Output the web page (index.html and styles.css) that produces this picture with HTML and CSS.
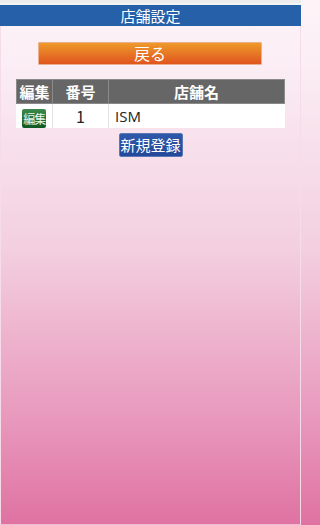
FILE: index.html
```html
<!DOCTYPE html>
<html lang="ja">
<head>
<meta charset="utf-8">
<title>店舗設定</title>
<link rel="stylesheet" href="styles.css">
</head>
<body>
<div class="page">
  <div class="topstrip"></div>
  <header class="header">店舗設定</header>
  <div class="back-wrap">
    <a class="back-btn">戻る</a>
  </div>
  <table class="shops">
    <thead>
      <tr>
        <th class="c-edit">編集</th>
        <th class="c-no">番号</th>
        <th class="c-name">店舗名</th>
      </tr>
    </thead>
    <tbody>
      <tr>
        <td class="c-edit"><span class="edit-btn">編集</span></td>
        <td class="c-no">1</td>
        <td class="c-name name">ISM</td>
      </tr>
    </tbody>
  </table>
  <div class="new-wrap">
    <a class="new-btn">新規登録</a>
  </div>
</div>
</body>
</html>
```
FILE: styles.css
```css
html, body {
  margin: 0;
  padding: 0;
}
body {
  font-family: "Noto Sans CJK JP", "Noto Sans", "DejaVu Sans", sans-serif;
  height: 525px;
  overflow: hidden;
  background: linear-gradient(to bottom, #fdf4f8 0px, #fbeef4 60px, #f3cfe0 250px, #e898bc 420px, #df72a2 525px);
}
.page {
  box-sizing: border-box;
  width: 301px;
  height: 525px;
  border-left: 1px solid #f6dce8;
  border-right: 1px solid #f6dce8;
  border-bottom: 1px solid #f2bcd4;
  background: linear-gradient(to bottom, #fdf4f8 0px, #fbeef4 60px, #f3cfe0 250px, #e898bc 420px, #df72a2 525px);
  display: flex;
  flex-direction: column;
}
.topstrip {
  height: 5px;
  background: #f3f3f3;
  border-top: 3px solid #ececec;
  box-sizing: border-box;
  margin: 0 -1px;
}
.header {
  height: 21px;
  background: #2660a8;
  color: #fff;
  text-align: center;
  font-size: 15px;
  line-height: 21px;
  margin: 0 -1px;
}
.back-wrap {
  padding: 16px 38px 0 37px;
}
.back-btn {
  display: block;
  height: 21px;
  line-height: 21px;
  text-align: center;
  color: #fff;
  font-size: 16px;
  background: linear-gradient(to bottom, #ee9a2a, #e0541f);
  border: 1px solid #e8b090;
  border-radius: 1px;
}
.shops {
  margin: 14px 0 0 15px;
  width: 269px;
  border-collapse: collapse;
  background: #fff;
}
.shops th {
  background: #666666;
  color: #fff;
  font-weight: bold;
  font-size: 15px;
  height: 23px;
  padding: 0;
  border: 1px solid #8a8a8a;
  line-height: 22px;
}
.shops td {
  height: 22px;
  padding: 0;
  font-size: 16px;
  text-align: center;
  border-left: 1px solid #e4e4e4;
  color: #222;
}
.shops td:first-child { border-left: none; }
.c-edit { width: 35px; }
.c-no { width: 55px; }
.shops td.name {
  text-align: left;
  padding-left: 6px;
  font-family: "Open Sans", "Noto Sans", sans-serif;
  font-size: 15px;
}
.edit-btn {
  display: inline-block;
  width: 24px;
  height: 19px;
  line-height: 19px;
  font-size: 12px;
  color: #e8f4e8;
  background: linear-gradient(to bottom, #3c8a4a, #0f5a22);
  border-radius: 2px;
  vertical-align: middle;
  letter-spacing: -1px;
}
.new-wrap {
  display: flex;
  justify-content: center;
  padding-top: 5px;
}
.new-btn {
  display: block;
  width: 62px;
  height: 22px;
  line-height: 22px;
  text-align: center;
  color: #fff;
  font-size: 15px;
  background: linear-gradient(to bottom, #3058a8, #24489a);
  border: 1px solid #5a78b8;
  border-radius: 2px;
  white-space: nowrap;
}
```
